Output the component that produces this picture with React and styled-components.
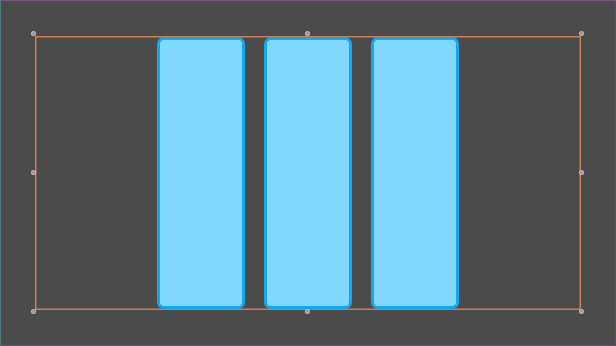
import styled, { createGlobalStyle } from 'styled-components'

const GlobalStyle = createGlobalStyle`
  html, body {
    margin: 0;
    padding: 0;
    background: #4b4b4b;
    font-family: "Liberation Sans", Arial, sans-serif;
  }
`

const handles = [
  { x: 0, y: 0 },
  { x: 50, y: 0 },
  { x: 100, y: 0 },
  { x: 0, y: 50 },
  { x: 100, y: 50 },
  { x: 0, y: 100 },
  { x: 50, y: 100 },
  { x: 100, y: 100 },
]

function App() {
  return (
    <>
      <GlobalStyle />
      <Canvas>
        <Selection>
          <Columns>
            <Bar />
            <Bar />
            <Bar />
          </Columns>
          {handles.map(h => (
            <Handle key={`${h.x}-${h.y}`} $x={h.x} $y={h.y} />
          ))}
        </Selection>
      </Canvas>
    </>
  )
}

const Canvas = styled.div`
  box-sizing: border-box;
  width: 616px;
  height: 346px;
  background: #4b4b4b;
  border-top: 1px solid #745a78;
  border-left: 1px solid #4f7a80;
  border-bottom: 1px solid #5e5478;
  border-right: 1px solid #55505c;
  padding: 35px 0 0 34px;
`

const Selection = styled.div`
  position: relative;
  box-sizing: border-box;
  width: 546px;
  height: 274px;
  box-shadow: inset 0 0 0 1.5px #c98058;
  padding: 1px;
`

const Columns = styled.div`
  position: relative;
  display: flex;
  gap: 19px;
  height: 100%;
  padding-left: 121px;
`

const Bar = styled.div`
  box-sizing: border-box;
  width: 88px;
  height: 100%;
  background: #80d8ff;
  border: 3px solid #16a6ec;
  border-radius: 7px;
`

const offsetX = v => (v === 0 ? -4 : v === 100 ? -2 : -3)
const offsetY = v => (v === 0 ? -5 : v === 100 ? -1 : -3)

const Handle = styled.div`
  position: absolute;
  left: calc(${p => p.$x}% + ${p => offsetX(p.$x)}px);
  top: calc(${p => p.$y}% + ${p => offsetY(p.$y)}px);
  width: 5px;
  height: 5px;
  border-radius: 50%;
  background: radial-gradient(circle, #e8707c 0 30%, #a0c4dc 45% 100%);
`

export default App
